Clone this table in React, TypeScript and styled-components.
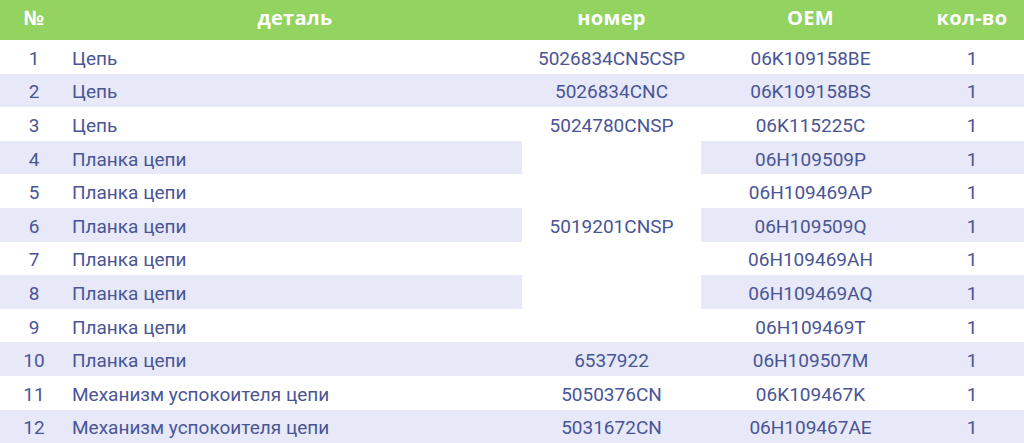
import * as React from 'react';
import styled, { createGlobalStyle } from 'styled-components';

const palette = {
  green: '#93d35f',
  band: '#e7e9f8',
  text: '#4a5596',
  white: '#ffffff',
};

const GlobalStyle = createGlobalStyle`
  html, body {
    margin: 0;
    padding: 0;
    background: ${palette.white};
    overflow: hidden;
  }
`;

const PartsTable = styled.table`
  width: 1024px;
  border-collapse: collapse;
  table-layout: fixed;
  font-family: Roboto, 'Noto Sans', sans-serif;
  color: ${palette.text};
`;

const HeadRow = styled.tr`
  height: 40px;
  background: ${palette.green};
`;

const HeadCell = styled.th<{ $width: number }>`
  width: ${(p) => p.$width}px;
  padding: 0 0 6px;
  font-family: 'Open Sans', 'DejaVu Sans', sans-serif;
  font-weight: 700;
  font-size: 20px;
  color: ${palette.white};
  text-align: center;
  letter-spacing: 0.3px;
`;

const BodyRow = styled.tr<{ $banded: boolean }>`
  height: 33.6px;
  background: ${(p) => (p.$banded ? palette.band : palette.white)};
`;

const Cell = styled.td<{ $align?: 'left' | 'center' }>`
  padding: 3px 0 0 ${(p) => (p.$align === 'left' ? '4px' : '0')};
  font-size: 19px;
  font-weight: 400;
  text-align: ${(p) => p.$align || 'center'};
  white-space: nowrap;
  line-height: 1;
`;

const MergedCell = styled(Cell)`
  background: ${palette.white};
`;

interface Part {
  name: string;
  number?: string;
  span?: number;
  merged?: boolean;
  oem: string;
  qty: number;
}

const parts: Part[] = [
  { name: 'Цепь', number: '5026834CN5CSP', oem: '06K109158BE', qty: 1 },
  { name: 'Цепь', number: '5026834CNC', oem: '06K109158BS', qty: 1 },
  { name: 'Цепь', number: '5024780CNSP', oem: '06K115225C', qty: 1 },
  { name: 'Планка цепи', number: '5019201CNSP', span: 5, oem: '06H109509P', qty: 1 },
  { name: 'Планка цепи', merged: true, oem: '06H109469AP', qty: 1 },
  { name: 'Планка цепи', merged: true, oem: '06H109509Q', qty: 1 },
  { name: 'Планка цепи', merged: true, oem: '06H109469AH', qty: 1 },
  { name: 'Планка цепи', merged: true, oem: '06H109469AQ', qty: 1 },
  { name: 'Планка цепи', number: '', oem: '06H109469T', qty: 1 },
  { name: 'Планка цепи', number: '6537922', oem: '06H109507M', qty: 1 },
  { name: 'Механизм успокоителя цепи', number: '5050376CN', oem: '06K109467K', qty: 1 },
  { name: 'Механизм успокоителя цепи', number: '5031672CN', oem: '06H109467AE', qty: 1 },
];

const App: React.FC = () => {
  return (
    <>
      <GlobalStyle />
      <PartsTable>
        <thead>
          <HeadRow>
            <HeadCell $width={68}>№</HeadCell>
            <HeadCell $width={454}>деталь</HeadCell>
            <HeadCell $width={179}>номер</HeadCell>
            <HeadCell $width={219}>OEM</HeadCell>
            <HeadCell $width={104}>кол-во</HeadCell>
          </HeadRow>
        </thead>
        <tbody>
          {parts.map((part, i) => (
            <BodyRow key={i} $banded={i % 2 === 1}>
              <Cell>{i + 1}</Cell>
              <Cell $align="left">{part.name}</Cell>
              {!part.merged &&
                (part.span ? (
                  <MergedCell rowSpan={part.span}>{part.number}</MergedCell>
                ) : (
                  <Cell>{part.number}</Cell>
                ))}
              <Cell>{part.oem}</Cell>
              <Cell>{part.qty}</Cell>
            </BodyRow>
          ))}
        </tbody>
      </PartsTable>
    </>
  );
};

export default App;
